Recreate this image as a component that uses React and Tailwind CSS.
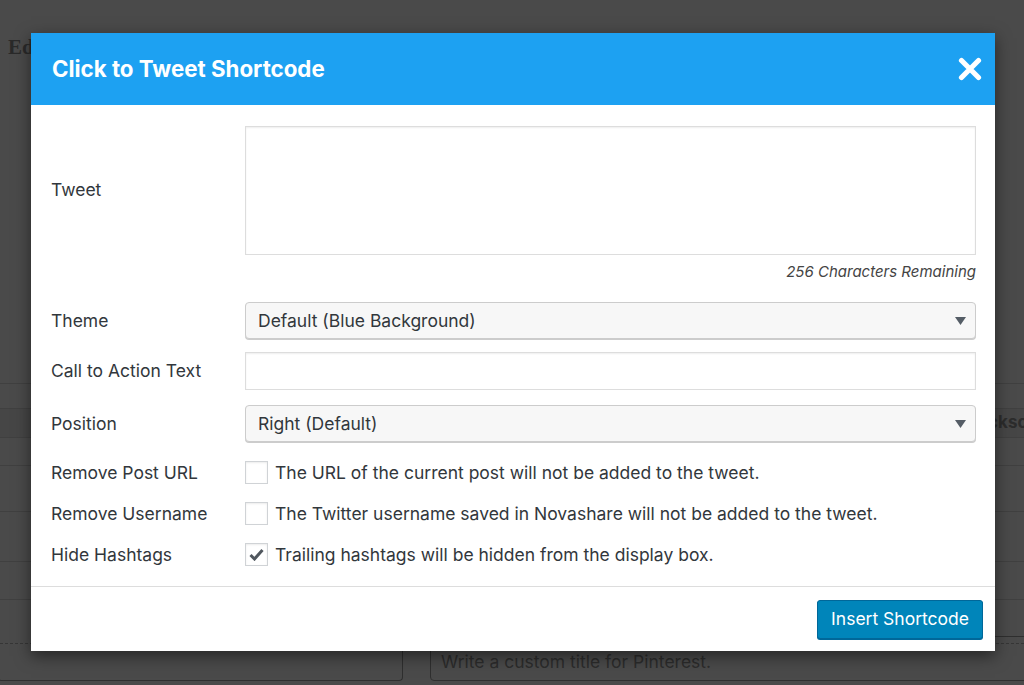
import React from 'react';

const font = { fontFamily: 'Inter, "Liberation Sans", sans-serif' };

function Caret() {
  return (
    <svg width="11" height="8" viewBox="0 0 11 8" className="shrink-0">
      <path d="M0 0 L11 0 L5.5 8 Z" fill="#555d66" />
    </svg>
  );
}

function Select({ value }) {
  return (
    <div className="flex-1 h-[37px] flex items-center justify-between pl-[12px] pr-[9px] bg-[#f7f7f7] border border-[#cccccc] rounded-[4px] shadow-[0_1px_0_#cccccc] text-[17.5px] text-[#32373c]">
      <span>{value}</span>
      <Caret />
    </div>
  );
}

function Check({ checked }) {
  return (
    <div className="w-[23px] h-[23px] border border-[#d0d3d6] bg-white shadow-[inset_0_1px_2px_rgba(0,0,0,0.08)] flex items-center justify-center shrink-0">
      {checked ? (
        <svg width="15" height="13" viewBox="0 0 15 13">
          <path d="M1.5 7 L5.5 11 L13.5 2" fill="none" stroke="#50575e" strokeWidth="3" />
        </svg>
      ) : null}
    </div>
  );
}

const rows = [
  ['Remove Post URL', 'The URL of the current post will not be added to the tweet.', false],
  ['Remove Username', 'The Twitter username saved in Novashare will not be added to the tweet.', false],
  ['Hide Hashtags', 'Trailing hashtags will be hidden from the display box.', true],
];

export default function App() {
  return (
    <div className="relative w-[1024px] h-[685px] overflow-hidden bg-[#4a4a4a]" style={font}>
      {/* page underneath the overlay */}
      <div className="pt-[33px] pl-[8px] text-[21px] leading-[28px] font-bold text-[#2a2a2a]" style={{ fontFamily: '"Liberation Serif", serif' }}>Edit Post</div>
      <div className="mt-[322px] border-t border-[#404040]" />
      <div className="h-[25px] border-b border-[#404040]" />
      <div className="h-[29px] border-b border-[#404040] bg-[#464646] flex justify-end items-center">
        <span className="text-[17px] font-bold text-[#2c2c2c] -mr-[14px]">Backsch</span>
      </div>
      <div className="h-[28px] border-b border-[#404040]" />
      <div className="h-[46px] border-b border-[#404040]" />
      <div className="h-[50px] border-b border-[#404040]" />
      <div className="h-[38px] border-b border-[#404040]" />
      <div className="h-[44px] border-b border-dashed border-[#363636]" />
      <div className="flex gap-[27px]">
        <div className="w-[405px] -ml-[2px] h-[37px] border border-t-0 border-[#2f2f2f] rounded-b-[4px] shrink-0" />
        <div className="flex-1 -mr-[10px] -mt-[8px] h-[45px] border border-[#2f2f2f] rounded-[4px] pt-[15px] pl-[10px] text-[17.5px] leading-[20px] text-[#2c2c2c]">Write a custom title for Pinterest.</div>
      </div>

      {/* modal */}
      <div className="absolute left-[31px] top-[33px] w-[964px] bg-white shadow-[0_5px_15px_rgba(0,0,0,0.5)]">
        <div className="h-[72px] bg-[#1da1f2] flex items-center justify-between pl-[21px] pr-[13px]">
          <h1 className="text-[22.3px] font-bold text-white">Click to Tweet Shortcode</h1>
          <svg width="24" height="24" viewBox="0 0 24 24">
            <path d="M3.5 3.5 L20.5 20.5 M20.5 3.5 L3.5 20.5" stroke="#ffffff" strokeWidth="5.2" strokeLinecap="round" />
          </svg>
        </div>

        <div className="pt-[21px] pl-[20px] pr-[19px] pb-[11px] text-[17.5px] leading-[24px] text-[#32373c]">
          <div className="flex items-center">
            <div className="w-[194px] shrink-0 -mt-[2px]">Tweet</div>
            <div className="flex-1 h-[129px] border border-[#dddddd] shadow-[inset_0_1px_2px_rgba(0,0,0,0.07)]" />
          </div>
          <div className="mt-[7px] text-right italic text-[15px] leading-[20px] text-[#444]">256 Characters Remaining</div>

          <div className="mt-[20px] flex items-center">
            <div className="w-[194px] shrink-0">Theme</div>
            <Select value="Default (Blue Background)" />
          </div>
          <div className="mt-[13px] flex items-center">
            <div className="w-[194px] shrink-0">Call to Action Text</div>
            <div className="flex-1 h-[38px] border border-[#dddddd] shadow-[inset_0_1px_2px_rgba(0,0,0,0.07)]" />
          </div>
          <div className="mt-[15px] flex items-center">
            <div className="w-[194px] shrink-0">Position</div>
            <Select value="Right (Default)" />
          </div>

          <div className="mt-[10px]">
            {rows.map(([label, text, checked]) => (
              <div key={label} className="h-[41px] flex items-center">
                <div className="w-[194px] shrink-0">{label}</div>
                <Check checked={checked} />
                <span className="ml-[7px]">{text}</span>
              </div>
            ))}
          </div>
        </div>

        <div className="border-t border-[#dddddd] h-[65px] flex items-center justify-end pr-[12px]">
          <button className="h-[39px] px-[13px] bg-[#0085ba] border border-[#006799] rounded-[3px] text-white text-[17.5px] shadow-[0_1px_0_#006799]">Insert Shortcode</button>
        </div>
      </div>
    </div>
  );
}
